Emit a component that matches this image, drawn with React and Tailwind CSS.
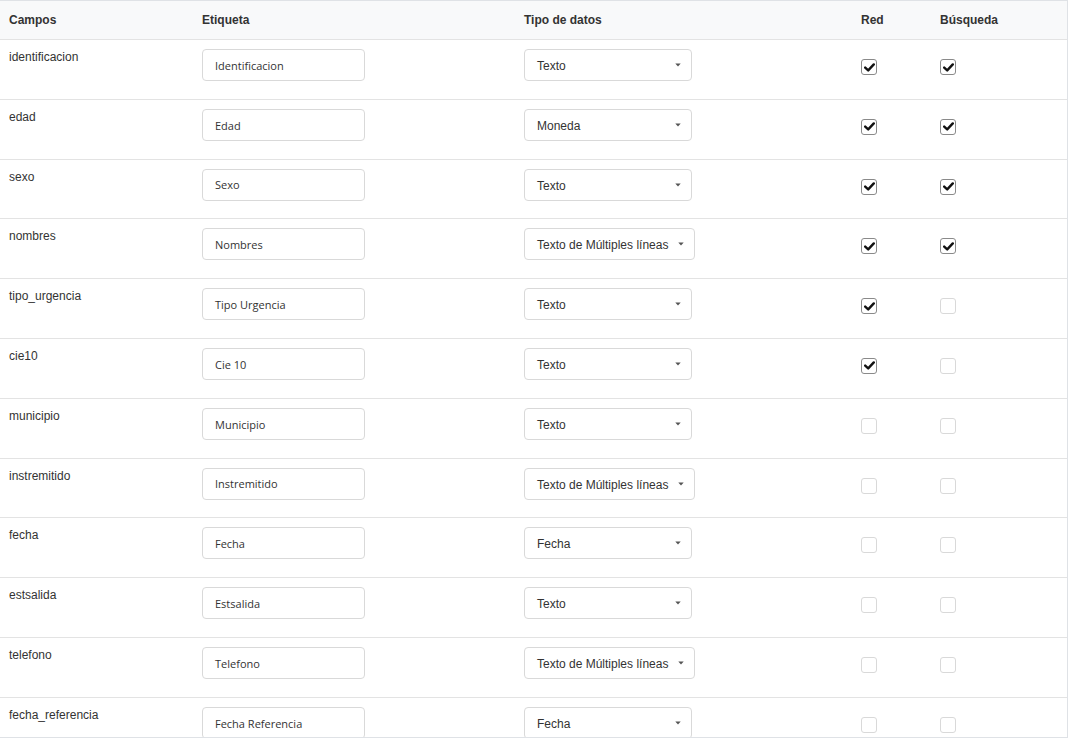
import React from "react";

const rows = [
  ["identificacion", "Identificacion", "Texto", true, true],
  ["edad", "Edad", "Moneda", true, true],
  ["sexo", "Sexo", "Texto", true, true],
  ["nombres", "Nombres", "Texto de Múltiples líneas", true, true],
  ["tipo_urgencia", "Tipo Urgencia", "Texto", true, false],
  ["cie10", "Cie 10", "Texto", true, false],
  ["municipio", "Municipio", "Texto", false, false],
  ["instremitido", "Instremitido", "Texto de Múltiples líneas", false, false],
  ["fecha", "Fecha", "Fecha", false, false],
  ["estsalida", "Estsalida", "Texto", false, false],
  ["telefono", "Telefono", "Texto de Múltiples líneas", false, false],
  ["fecha_referencia", "Fecha Referencia", "Fecha", false, false],
];

function Check({ on }) {
  return (
    <div
      className={
        "w-[16px] h-[16px] rounded-[3px] border bg-white flex items-center justify-center " +
        (on ? "border-[#8a8a8a]" : "border-[#d9d9d9]")
      }
    >
      {on && (
        <svg width="11" height="9" viewBox="0 0 11 9">
          <path d="M1.2 4.6 L4.2 7.4 L9.8 1.4" fill="none" stroke="#111" strokeWidth="2.4" strokeLinecap="round" strokeLinejoin="round" />
        </svg>
      )}
    </div>
  );
}

export default function App() {
  return (
    <div
      className="w-[1068px] h-[738px] overflow-hidden border-t border-r border-b border-[#dfe2e6] bg-white text-[#333]"
      style={{ fontFamily: '"Liberation Sans", Arial, sans-serif' }}
    >
      <div className="grid grid-cols-[193px_322px_337px_79px_136px] h-[39px] items-center bg-[#f8f9fa] border-b border-[#e3e3e3] text-[12px] font-bold">
        <div className="pl-[9px] pb-[1px]">Campos</div>
        <div className="pl-[9px] pb-[1px]">Etiqueta</div>
        <div className="pl-[9px] pb-[1px]">Tipo de datos</div>
        <div className="pl-[9px] pb-[1px]">Red</div>
        <div className="pl-[9px] pb-[1px]">Búsqueda</div>
      </div>
      {rows.map(([campo, etiqueta, tipo, red, bus]) => (
        <div
          key={campo}
          className="grid grid-cols-[193px_322px_337px_79px_136px] h-[59.8px] border-b border-[#e3e3e3] text-[12px]"
        >
          <div className="pl-[9px] pt-[9px] leading-[17px]">{campo}</div>
          <div className="pl-[9px] pt-[9px]">
            <div
              className="w-[163px] h-[32px] border border-[#d9d9d9] rounded-[4px] flex items-center pl-[12px] pt-[2px] text-[11px] text-[#333]"
              style={{ fontFamily: '"Open Sans", sans-serif' }}
            >
              {etiqueta}
            </div>
          </div>
          <div className="pl-[9px] pt-[9px]">
            <div
              className={
                "h-[32px] border border-[#d9d9d9] rounded-[4px] flex items-center justify-between pl-[12px] pr-[10px] pt-[2px] text-[12px] text-[#333] " +
                (tipo.length > 10 ? "w-[171px]" : "w-[168px]")
              }
            >
              <span>{tipo}</span>
              <svg width="6" height="4" viewBox="0 0 6 4" className="mb-[2px]">
                <path d="M0.3 0.5 L5.7 0.5 L3 3.4 Z" fill="#555" />
              </svg>
            </div>
          </div>
          <div className="pl-[9px] pt-[19px]">
            <Check on={red} />
          </div>
          <div className="pl-[9px] pt-[19px]">
            <Check on={bus} />
          </div>
        </div>
      ))}
    </div>
  );
}
